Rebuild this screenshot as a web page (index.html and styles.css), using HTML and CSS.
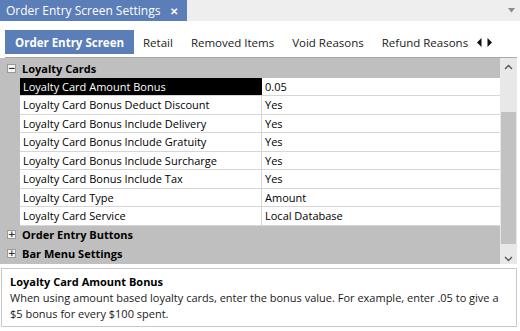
FILE: index.html
```html
<!DOCTYPE html>
<html>
<head>
<meta charset="utf-8">
<link rel="stylesheet" href="styles.css">
</head>
<body>
<div class="doc-bar">
  <div class="doc-tab"><span>Order Entry Screen Settings</span><span class="close">✕</span></div>
  <svg class="dd" width="7" height="5" viewBox="0 0 7 5"><path d="M0 0H7L3.5 4.5Z" fill="#8a8a8a"/></svg>
</div>
<div class="tabs">
  <div class="tab active">Order Entry Screen</div>
  <div class="tab">Retail</div>
  <div class="tab">Removed Items</div>
  <div class="tab">Void Reasons</div>
  <div class="tab">Refund Reasons</div>
  <div class="arrows">
    <svg width="5" height="9" viewBox="0 0 5 9"><path d="M4.5 0V9L0 4.5Z" fill="#111"/></svg>
    <svg width="5" height="9" viewBox="0 0 5 9"><path d="M0.5 0V9L5 4.5Z" fill="#111"/></svg>
  </div>
</div>
<div class="grid">
  <div class="rows">
    <div class="group"><span class="box">−</span><span class="gname">Loyalty Cards</span></div>
    <div class="row sel"><div class="name">Loyalty Card Amount Bonus</div><div class="val">0.05</div></div>
    <div class="row"><div class="name">Loyalty Card Bonus Deduct Discount</div><div class="val">Yes</div></div>
    <div class="row"><div class="name">Loyalty Card Bonus Include Delivery</div><div class="val">Yes</div></div>
    <div class="row"><div class="name">Loyalty Card Bonus Include Gratuity</div><div class="val">Yes</div></div>
    <div class="row"><div class="name">Loyalty Card Bonus Include Surcharge</div><div class="val">Yes</div></div>
    <div class="row"><div class="name">Loyalty Card Bonus Include Tax</div><div class="val">Yes</div></div>
    <div class="row"><div class="name">Loyalty Card Type</div><div class="val">Amount</div></div>
    <div class="row"><div class="name">Loyalty Card Service</div><div class="val">Local Database</div></div>
    <div class="group"><span class="box">+</span><span class="gname">Order Entry Buttons</span></div>
    <div class="group"><span class="box">+</span><span class="gname">Bar Menu Settings</span></div>
  </div>
  <div class="scroll">
    <svg class="sarrow" width="9" height="6" viewBox="0 0 9 6"><path d="M1 5L4.5 1.5L8 5" fill="none" stroke="#555" stroke-width="1.4"/></svg>
    <div class="track"><div class="thumb"></div></div>
    <svg class="sarrow" width="9" height="6" viewBox="0 0 9 6"><path d="M1 1L4.5 4.5L8 1" fill="none" stroke="#555" stroke-width="1.4"/></svg>
  </div>
</div>
<div class="desc">
  <div class="dtitle">Loyalty Card Amount Bonus</div>
  <div class="dtext">When using amount based loyalty cards, enter the bonus value. For example, enter .05 to give a $5 bonus for every $100 spent.</div>
</div>
</body>
</html>
```
FILE: styles.css
```css
* { box-sizing: border-box; }
body {
  margin: 0;
  width: 520px;
  height: 331px;
  background: #ffffff;
  font-family: "Open Sans", "Noto Sans", sans-serif;
  font-size: 11px;
  color: #000;
  overflow: hidden;
}
.doc-bar {
  height: 21px;
  background: #eeeeee;
  display: flex;
  align-items: center;
  justify-content: space-between;
  padding-right: 5px;
}
.doc-tab {
  width: 187px;
  height: 21px;
  background: #5b7db8;
  color: #fff;
  font-size: 12px;
  display: flex;
  align-items: center;
  justify-content: space-between;
  padding: 0 9px 0 6px;
  white-space: nowrap;
}
.close { font-size: 10px; font-weight: bold; }
.tabs {
  height: 37px;
  display: flex;
  align-items: flex-start;
  padding-top: 9px;
  border-bottom: 1px solid #a9a9a9;
  margin: 0 3px 0 5px;
  white-space: nowrap;
}
.tab {
  height: 24px;
  display: flex;
  align-items: center;
  padding: 0 9px;
  font-size: 11.5px;
  color: #1a1a1a;
}
.tab.active {
  background: #5b7db8;
  color: #fff;
  font-weight: bold;
  padding: 0 10px;
}
.arrows {
  height: 24px;
  display: flex;
  align-items: center;
  gap: 5px;
  margin-left: 0;
}
.grid {
  height: 206px;
  display: flex;
  background: #bfbfbf;
  margin-right: 3px;
}
.rows {
  width: 500px;
  display: flex;
  flex-direction: column;
  padding-top: 1px;
}
.group {
  height: 18.5px;
  display: flex;
  align-items: center;
  font-weight: bold;
  background: #bfbfbf;
  white-space: nowrap;
}
.box {
  width: 9px;
  height: 9px;
  margin: 0 6px 0 7px;
  background: #f4f4f4;
  border: 1px solid #9a9a9a;
  font-size: 9px;
  line-height: 6px;
  text-align: center;
  color: #333;
  font-weight: bold;
  font-family: "DejaVu Sans", sans-serif;
}
.gname { font-size: 11px; }
.row {
  height: 18.5px;
  display: flex;
  margin-left: 20px;
  background: #fff;
  border-bottom: 1px solid #d6d6d6;
  white-space: nowrap;
}
.name {
  width: 242px;
  padding-left: 3px;
  display: flex;
  align-items: center;
  border-right: 1px solid #d6d6d6;
  font-size: 11px;
}
.val {
  flex: 1;
  padding-left: 3px;
  display: flex;
  align-items: center;
  font-size: 11px;
}
.row.sel .name {
  background: #000;
  color: #fff;
  border-right: 1px solid #000;
}
.scroll {
  width: 17px;
  background: #e8e8e8;
  display: flex;
  flex-direction: column;
  align-items: center;
}
.sarrow { margin: 6px 0; flex: none; }
.track {
  flex: 1;
  width: 17px;
  padding-top: 36px;
  padding-bottom: 6px;
  display: flex;
  justify-content: center;
}
.thumb {
  width: 15px;
  height: 132px;
  background: #c2c2c2;
}
.desc {
  margin: 4px 3px 0 1px;
  height: 59px;
  border: 1px solid #c9c9c9;
  padding: 5px 8px;
}
.dtitle {
  font-weight: bold;
  font-size: 11px;
  line-height: 16px;
}
.dtext {
  font-size: 11px;
  line-height: 16px;
  color: #1a1a1a;
}
```
